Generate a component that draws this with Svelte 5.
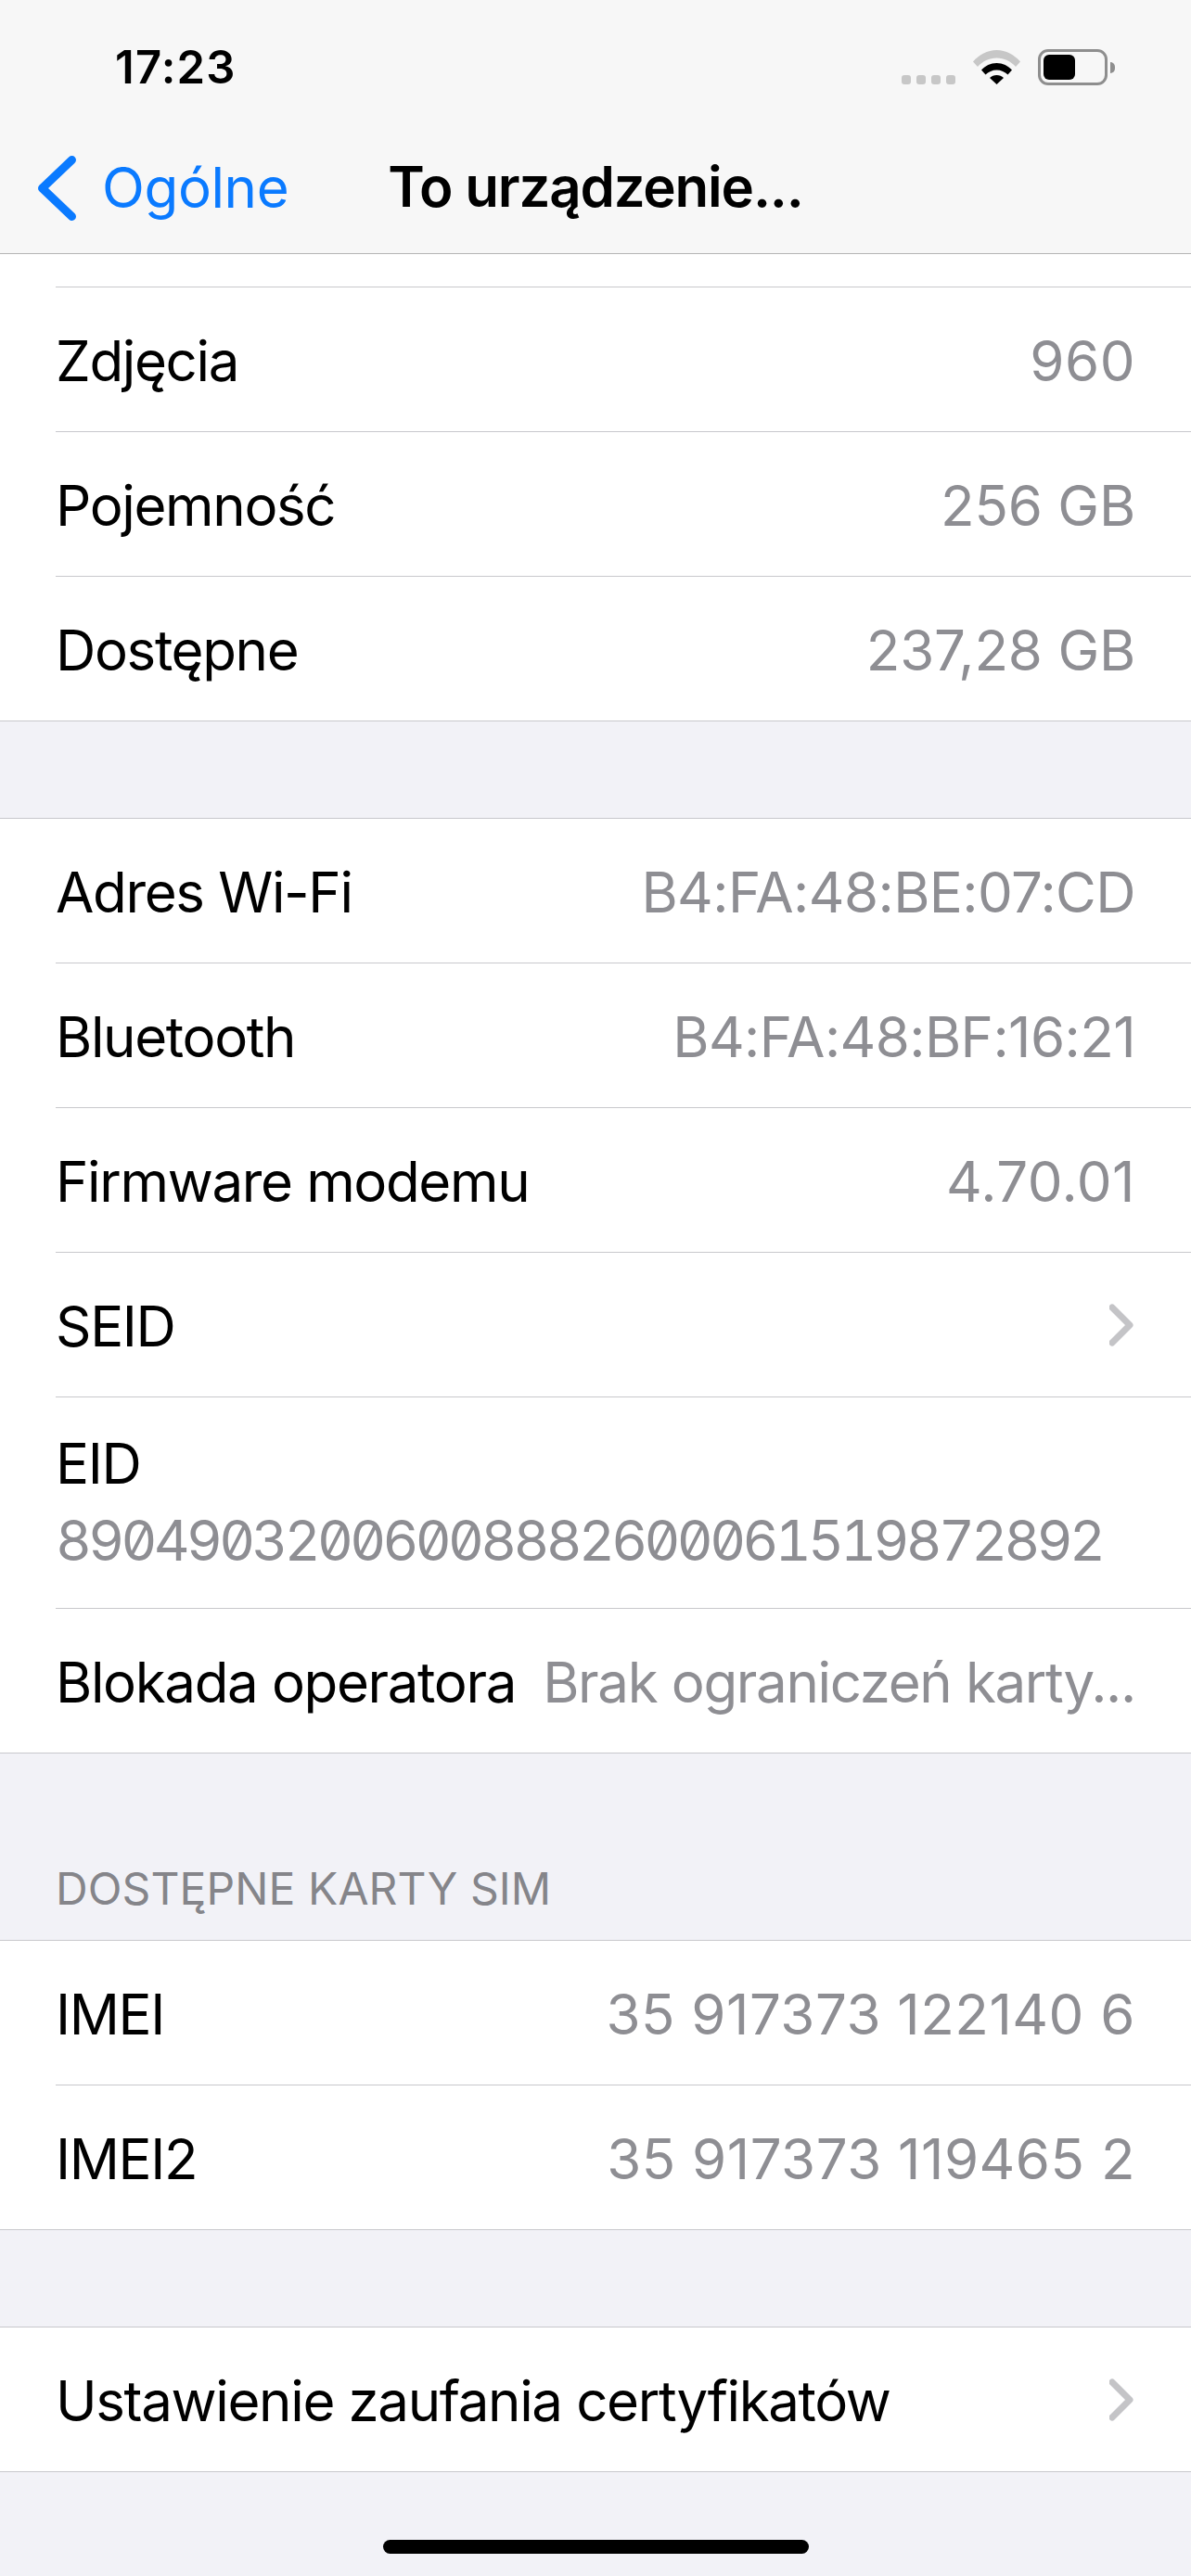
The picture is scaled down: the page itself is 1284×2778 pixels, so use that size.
<script>
  const groups = [
    [
      { label: "Adres Wi-Fi", value: "B4:FA:48:BE:07:CD" },
      { label: "Bluetooth", value: "B4:FA:48:BF:16:21" },
      { label: "Firmware modemu", value: "4.70.01", num: true },
      { label: "SEID", chevron: true },
    ],
  ];
</script>

<div class="screen">
  <header class="top">
    <div class="status">
      <span class="time">17:23</span>
      <div class="status-icons">
        <div class="dots"><i></i><i></i><i></i><i></i></div>
        <svg class="wifi" width="51" height="37" viewBox="0 0 51 37">
          <path d="M0 12.5C6.500 5 15.500 0 25.500 0S44.500 5 51 12.500L46 18C40.500 12 33.500 8.500 25.500 8.500S10.500 12 5 18Z" fill="#c7c7c7" />
          <path d="M9 21.500C13 17 19 14 25.500 14S38 17 42 21.500L37.500 26.500C34.500 23.500 30 21.500 25.500 21.500S16.500 23.500 13.500 26.500Z" fill="#000" />
          <path d="M18 30C20 28 22.500 27 25.500 27S31 28 33 30L25.500 37Z" fill="#000" />
        </svg>
        <div class="battery"><div class="battery-fill"></div></div>
        <div class="nub"></div>
      </div>
    </div>
    <nav class="navbar">
      <div class="back">
        <svg width="41" height="70" viewBox="0 0 41 70">
          <path d="M36.500 4.500L4.500 35L36.500 65.500" fill="none" stroke="#0a7aff" stroke-width="9" stroke-linecap="round" stroke-linejoin="round" />
        </svg>
        <span>Ogólne</span>
      </div>
      <h1>To urządzenie...</h1>
      <div></div>
    </nav>
  </header>

  <main>
    <section class="group noedge">
      <div class="row stub"></div>
      <div class="row"><span>Zdjęcia</span><span class="value num">960</span></div>
      <div class="row"><span>Pojemność</span><span class="value unit">256 GB</span></div>
      <div class="row last"><span>Dostępne</span><span class="value unit">237,28 GB</span></div>
    </section>

    <div class="gap"></div>

    <section class="group">
      {#each groups[0] as item}
        <div class="row">
          <span>{item.label}</span>
          {#if item.chevron}
            <svg class="chev" width="28" height="46" viewBox="0 0 28 46">
              <path d="M3 4L22 23L3 42" fill="none" stroke="#c4c4c7" stroke-width="7" stroke-linecap="round" stroke-linejoin="round" />
            </svg>
          {:else}
            <span class="value" class:num={item.num}>{item.value}</span>
          {/if}
        </div>
      {/each}
      <div class="row eid">
        <span>EID</span>
        <span class="value digits">89049032006008882600061519872892</span>
      </div>
      <div class="row last">
        <span>Blokada operatora</span>
        <span class="value words">Brak ograniczeń karty...</span>
      </div>
    </section>

    <div class="section-title">DOSTĘPNE KARTY SIM</div>

    <section class="group">
      <div class="row"><span>IMEI</span><span class="value num">35 917373 122140 6</span></div>
      <div class="row last"><span>IMEI2</span><span class="value num">35 917373 119465 2</span></div>
    </section>

    <div class="gap"></div>

    <section class="group">
      <div class="row last">
        <span>Ustawienie zaufania certyfikatów</span>
        <svg class="chev" width="28" height="46" viewBox="0 0 28 46">
          <path d="M3 4L22 23L3 42" fill="none" stroke="#c4c4c7" stroke-width="7" stroke-linecap="round" stroke-linejoin="round" />
        </svg>
      </div>
    </section>
  </main>

  <div class="home-bar"></div>
</div>

<style>
  :global(body) {
    margin: 0;
    background: #f2f2f7;
  }
  .screen {
    position: relative;
    width: 1284px;
    height: 2778px;
    overflow: hidden;
    background: #f2f2f7;
    font-family: Inter, "Liberation Sans", sans-serif;
    font-size: 60px;
    letter-spacing: -1.35px;
    color: #000;
  }
  .top {
    height: 273px;
    background: #f7f7f7;
    border-bottom: 1px solid #b5b5b5;
  }
  .status {
    height: 132px;
    display: flex;
    justify-content: space-between;
    align-items: flex-start;
    padding: 0 82px 0 124px;
  }
  .time {
    margin-top: 43px;
    font-size: 49px;
    font-weight: 600;
    line-height: 60px;
    letter-spacing: 1.2px;
  }
  .status-icons {
    display: flex;
    align-items: flex-start;
    margin-top: 53px;
  }
  .dots {
    display: flex;
    gap: 6px;
    margin: 28px 19px 0 0;
  }
  .dots i {
    width: 10px;
    height: 10px;
    border-radius: 3px;
    background: #c7c7c7;
  }
  .wifi {
    margin: 1px 19px 0 0;
  }
  .battery {
    box-sizing: border-box;
    width: 75px;
    height: 39px;
    border: 3px solid #8e8e8e;
    border-radius: 11px;
    padding: 3px;
  }
  .battery-fill {
    width: 34px;
    height: 100%;
    background: #000;
    border-radius: 6px;
  }
  .nub {
    width: 5px;
    height: 12px;
    margin: 14px 0 0 3px;
    background: #8e8e8e;
    border-radius: 0 6px 6px 0;
  }
  .navbar {
    display: grid;
    grid-template-columns: 1fr auto 1fr;
    align-items: center;
    height: 141px;
    padding: 0 41px;
  }
  .back {
    display: flex;
    align-items: center;
    gap: 28px;
    color: #0a7aff;
    line-height: 1;
    letter-spacing: -0.4px;
  }
  .back span {
    margin-top: -2px;
  }
  h1 {
    margin: -3px 0 0;
    font-size: 60px;
    font-weight: 600;
    line-height: 1;
    letter-spacing: -1.2px;
  }
  .group {
    background: #fff;
    border-top: 1px solid #c8c8cc;
    border-bottom: 1px solid #c8c8cc;
  }
  .noedge {
    border-top: none;
  }
  .row {
    box-sizing: border-box;
    height: 156px;
    margin-left: 60px;
    padding: 3px 60px 0 0;
    display: flex;
    justify-content: space-between;
    align-items: center;
    gap: 28px;
    border-bottom: 1px solid #c8c8cc;
    white-space: nowrap;
  }
  .row.last {
    height: 155px;
    border-bottom: none;
  }
  .row.stub {
    height: 36px;
  }
  .value {
    color: #8e8e93;
    letter-spacing: -0.6px;
  }
  .num {
    letter-spacing: 0.5px;
  }
  .unit {
    letter-spacing: -0.2px;
  }
  .words {
    letter-spacing: -1.35px;
  }
  .chev {
    margin-top: -3px;
  }
  .eid {
    height: 228px;
    flex-direction: column;
    align-items: flex-start;
    justify-content: center;
    gap: 11px;
    padding: 0 60px 3px 0;
  }
  .digits {
    font-feature-settings: "zero", "tnum";
    letter-spacing: -3.65px;
    line-height: 1.2;
  }
  .eid span:first-child {
    line-height: 1.2;
  }
  .gap {
    height: 104px;
  }
  .section-title {
    height: 201px;
    box-sizing: border-box;
    display: flex;
    align-items: flex-end;
    padding: 0 60px 28px;
    font-size: 48px;
    letter-spacing: 0.1px;
    line-height: 54px;
    color: #85858a;
  }
  .home-bar {
    position: absolute;
    left: 413px;
    bottom: 24px;
    width: 459px;
    height: 15px;
    border-radius: 8px;
    background: #000;
  }
</style>
